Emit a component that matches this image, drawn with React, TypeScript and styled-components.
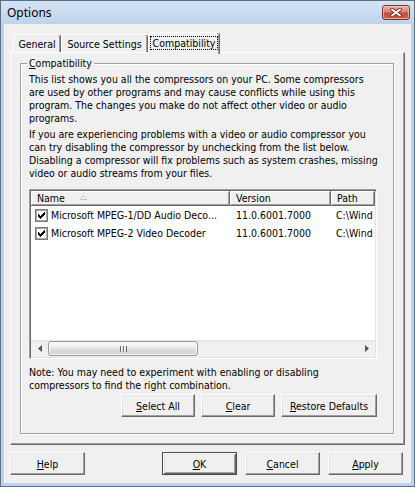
import React from "react";
import styled, { createGlobalStyle, css } from "styled-components";

const UI_FONT = `"DejaVu Sans Condensed", "DejaVu Sans", "Liberation Sans", sans-serif`;

const GlobalStyle = createGlobalStyle`
  html, body { margin: 0; padding: 0; background: #f0f0f0; }
  body {
    font-family: ${UI_FONT};
    font-stretch: condensed;
    font-size: 10.5px;
    color: #000;
  }
  * { box-sizing: border-box; }
`;

const Window = styled.div`
  width: 415px;
  height: 487px;
  border: 1px solid #5a6f88;
  background: #bcd3eb;
  padding: 0 3px 3px;
  display: flex;
  flex-direction: column;
`;

const TitleBar = styled.div`
  height: 23px;
  margin: 0 -3px;
  padding: 0 4px 0 6px;
  display: flex;
  align-items: center;
  justify-content: space-between;
  background: linear-gradient(#d6e4f4, #bcd3eb);
`;

const Title = styled.span`
  font: 12px "Noto Sans", "Open Sans", sans-serif;
  font-stretch: normal;
  color: #000;
`;

const CloseButton = styled.div`
  width: 28px;
  height: 15px;
  border: 1px solid #7f3125;
  border-radius: 3px;
  background: linear-gradient(#ebb1a5 0%, #d98272 45%, #c4503f 55%, #c9614f 100%);
  box-shadow: inset 0 0 0 1px rgba(255, 220, 210, 0.55);
  display: flex;
  align-items: center;
  justify-content: center;
`;

const Client = styled.div`
  flex: 1;
  background: #f0f0f0;
  padding: 8px 6px 8px 6px;
  display: flex;
  flex-direction: column;
`;

const TabStrip = styled.div`
  height: 20px;
  display: flex;
  align-items: flex-end;
  padding-left: 3px;
`;

const Tab = styled.div<{ $active?: boolean; $w: number }>`
  position: relative;
  z-index: ${(p) => (p.$active ? 2 : 1)};
  width: ${(p) => p.$w}px;
  height: ${(p) => (p.$active ? 22 : 18)}px;
  margin-bottom: ${(p) => (p.$active ? -2 : 0)}px;
  padding-bottom: ${(p) => (p.$active ? 2 : 0)}px;
  background: #f0f0f0;
  border: 1px solid;
  border-bottom: none;
  border-color: #fff #696969 transparent #fff;
  border-radius: 3px 3px 0 0;
  box-shadow: inset -1px 0 #a0a0a0;
  display: flex;
  align-items: center;
  justify-content: center;
  white-space: nowrap;
`;

const FocusLabel = styled.span`
  height: 14px;
  line-height: 12px;
  padding: 0 2px;
  border: 1px dotted #000;
`;

const TabPanel = styled.div`
  height: 393px;
  border: 1px solid;
  border-color: #fff #696969 #696969 #fff;
  box-shadow: inset -1px -1px #a0a0a0;
  padding: 4px 10px 0 9px;
`;

const GroupBox = styled.fieldset`
  margin: 0;
  padding: 3px 16px 16px 8px;
  border: 1px solid #a0a0a0;
  box-shadow: inset 1px 1px #fff, 1px 1px #fff;
  min-width: 0;
`;

const Legend = styled.legend`
  padding: 0 2px;
  margin-left: -2px;
  height: 13px;
  line-height: 13px;
`;

const Mn = styled.span`
  text-decoration: underline;
  text-underline-offset: 1px;
`;

const Para = styled.div<{ $gap?: number }>`
  margin-top: ${(p) => p.$gap ?? 0}px;
`;

const Line = styled.div`
  height: 13px;
  line-height: 13px;
  white-space: nowrap;
`;

const ListView = styled.div`
  margin-top: 9px;
  height: 170px;
  border: 1px solid;
  border-color: #a0a0a0 #fff #fff #a0a0a0;
  box-shadow: inset 1px 1px #696969, inset -1px -1px #e3e3e3;
  background: #fff;
  padding: 1px;
  display: flex;
  flex-direction: column;
  overflow: hidden;
`;

const COLS = "199px 101px 1fr";

const HeaderRow = styled.div`
  height: 15px;
  display: grid;
  grid-template-columns: ${COLS};
  flex: none;
`;

const HeaderCell = styled.div`
  background: #f0f0f0;
  border-right: 1px solid #696969;
  border-bottom: 1px solid #696969;
  box-shadow: inset 1px 1px #fff, inset -1px -1px #a0a0a0;
  padding-left: 6px;
  display: flex;
  align-items: center;
  white-space: nowrap;
  overflow: hidden;
  line-height: 13px;
`;

const SortArrow = styled.svg`
  margin-left: 15px;
  margin-top: -2px;
`;

const Rows = styled.div`
  flex: 1;
`;

const Row = styled.div`
  height: 18px;
  display: grid;
  grid-template-columns: ${COLS};
  align-items: center;
`;

const Cell = styled.div<{ $pad?: number }>`
  padding-left: ${(p) => p.$pad ?? 6}px;
  white-space: nowrap;
  overflow: hidden;
  display: flex;
  align-items: center;
  gap: 3px;
`;

const CheckBox = styled.span`
  width: 13px;
  height: 13px;
  flex: none;
  border: 1px solid #7b7b7b;
  box-shadow: inset 0 0 0 1px #a6a6a6;
  background: #fff;
  display: flex;
  align-items: center;
  justify-content: center;
`;

const ScrollBar = styled.div`
  height: 17px;
  flex: none;
  display: flex;
  align-items: center;
  background: linear-gradient(#e4e4e4, #efefef 3px, #f1f1f1);
`;

const ArrowBtn = styled.div`
  width: 17px;
  height: 17px;
  flex: none;
  display: flex;
  align-items: center;
  justify-content: center;
`;

const Thumb = styled.div`
  width: 150px;
  height: 15px;
  flex: none;
  border: 1px solid #979797;
  border-radius: 3px;
  background: linear-gradient(#f7f7f7 0%, #ececec 45%, #dcdcdc 55%, #d2d2d2 100%);
  box-shadow: inset 0 0 0 1px #fbfbfb;
  display: flex;
  align-items: center;
  justify-content: center;
`;

const Track = styled.div`
  flex: 1;
`;

const Note = styled.div`
  margin-top: 7px;
`;

const ButtonRow = styled.div`
  margin-top: 2px;
  display: flex;
  justify-content: flex-end;
  gap: 6px;
`;

const Button = styled.button<{ $w: number; $default?: boolean }>`
  width: ${(p) => p.$w}px;
  height: 23px;
  padding: 0;
  margin: 0;
  font: 10.5px ${UI_FONT};
  font-stretch: condensed;
  color: #000;
  background: #f0f0f0;
  border: 1px solid;
  border-color: #fff #696969 #696969 #fff;
  box-shadow: inset -1px -1px #a0a0a0, inset 1px 1px #e3e3e3;
  ${(p) =>
    p.$default &&
    css`
      border-color: #4a4a4a;
      box-shadow: inset 1px 1px #fff, inset -1px -1px #696969,
        inset 2px 2px #e3e3e3, inset -2px -2px #a0a0a0;
    `}
`;

const DialogButtons = styled.div`
  margin-top: 7px;
  padding-right: 2px;
  display: flex;
  gap: 8px;
  & > :first-child {
    margin-right: auto;
  }
`;

const CHECK_Y = [2, 3, 4, 3, 2, 1, 0];

const Check = () => (
  <svg width="7" height="7" viewBox="0 0 7 7" shapeRendering="crispEdges">
    {CHECK_Y.map((y, x) => (
      <rect key={x} x={x} y={y} width="1" height="3" fill="#000" />
    ))}
  </svg>
);

const rows = [
  { name: "Microsoft MPEG-1/DD Audio Deco...", version: "11.0.6001.7000", path: "C:\\Wind" },
  { name: "Microsoft MPEG-2 Video Decoder", version: "11.0.6001.7000", path: "C:\\Wind" },
];

export default function App() {
  return (
    <>
      <GlobalStyle />
      <Window>
        <TitleBar>
          <Title>Options</Title>
          <CloseButton>
            <svg width="14" height="9" viewBox="0 0 14 9">
              <path d="M3 1.5 L11 7.5 M11 1.5 L3 7.5" stroke="#6b2419" strokeWidth="3.6" strokeLinecap="round" />
              <path d="M3 1.5 L11 7.5 M11 1.5 L3 7.5" stroke="#fff" strokeWidth="2" strokeLinecap="round" />
            </svg>
          </CloseButton>
        </TitleBar>
        <Client>
          <TabStrip>
            <Tab $w={48}>General</Tab>
            <Tab $w={87}>Source Settings</Tab>
            <Tab $w={72} $active>
              <FocusLabel>Compatibility</FocusLabel>
            </Tab>
          </TabStrip>
          <TabPanel>
            <GroupBox>
              <Legend>
                <Mn>C</Mn>ompatibility
              </Legend>
              <Para>
                <Line>This list shows you all the compressors on your PC. Some compressors</Line>
                <Line>are used by other programs and may cause conflicts while using this</Line>
                <Line>program. The changes you make do not affect other video or audio</Line>
                <Line>programs.</Line>
              </Para>
              <Para $gap={3}>
                <Line>If you are experiencing problems with a video or audio compressor you</Line>
                <Line>can try disabling the compressor by unchecking from the list below.</Line>
                <Line>Disabling a compressor will fix problems such as system crashes, missing</Line>
                <Line>video or audio streams from your files.</Line>
              </Para>
              <ListView>
                <HeaderRow>
                  <HeaderCell>
                    Name
                    <SortArrow width="7" height="5" viewBox="0 0 7 5">
                      <polygon points="0.5,4.5 3.5,0.5 6.5,4.5" fill="#fff" stroke="#c2c2c2" strokeWidth="1" />
                    </SortArrow>
                  </HeaderCell>
                  <HeaderCell>Version</HeaderCell>
                  <HeaderCell>Path</HeaderCell>
                </HeaderRow>
                <Rows>
                  {rows.map((r) => (
                    <Row key={r.name}>
                      <Cell $pad={4}>
                        <CheckBox>
                          <Check />
                        </CheckBox>
                        {r.name}
                      </Cell>
                      <Cell>{r.version}</Cell>
                      <Cell $pad={5}>{r.path}</Cell>
                    </Row>
                  ))}
                </Rows>
                <ScrollBar>
                  <ArrowBtn>
                    <svg width="4" height="7" viewBox="0 0 4 7">
                      <polygon points="4,0 0,3.5 4,7" fill="#555" />
                    </svg>
                  </ArrowBtn>
                  <Thumb>
                    <svg width="7" height="6" viewBox="0 0 7 6" shapeRendering="crispEdges">
                      <rect x="0" y="0" width="1" height="6" fill="#6a6a6a" />
                      <rect x="1" y="0" width="1" height="6" fill="#fff" />
                      <rect x="3" y="0" width="1" height="6" fill="#6a6a6a" />
                      <rect x="4" y="0" width="1" height="6" fill="#fff" />
                      <rect x="6" y="0" width="1" height="6" fill="#6a6a6a" />
                    </svg>
                  </Thumb>
                  <Track />
                  <ArrowBtn>
                    <svg width="4" height="7" viewBox="0 0 4 7">
                      <polygon points="0,0 4,3.5 0,7" fill="#555" />
                    </svg>
                  </ArrowBtn>
                </ScrollBar>
              </ListView>
              <Note>
                <Line>Note: You may need to experiment with enabling or disabling</Line>
                <Line>compressors to find the right combination.</Line>
              </Note>
              <ButtonRow>
                <Button $w={74}>
                  <Mn>S</Mn>elect All
                </Button>
                <Button $w={74}>
                  <Mn>C</Mn>lear
                </Button>
                <Button $w={96}>
                  <Mn>R</Mn>estore Defaults
                </Button>
              </ButtonRow>
            </GroupBox>
          </TabPanel>
          <DialogButtons>
            <Button $w={75}>
              <Mn>H</Mn>elp
            </Button>
            <Button $w={75} $default>
              <Mn>O</Mn>K
            </Button>
            <Button $w={75}>
              <Mn>C</Mn>ancel
            </Button>
            <Button $w={75}>
              <Mn>A</Mn>pply
            </Button>
          </DialogButtons>
        </Client>
      </Window>
    </>
  );
}
